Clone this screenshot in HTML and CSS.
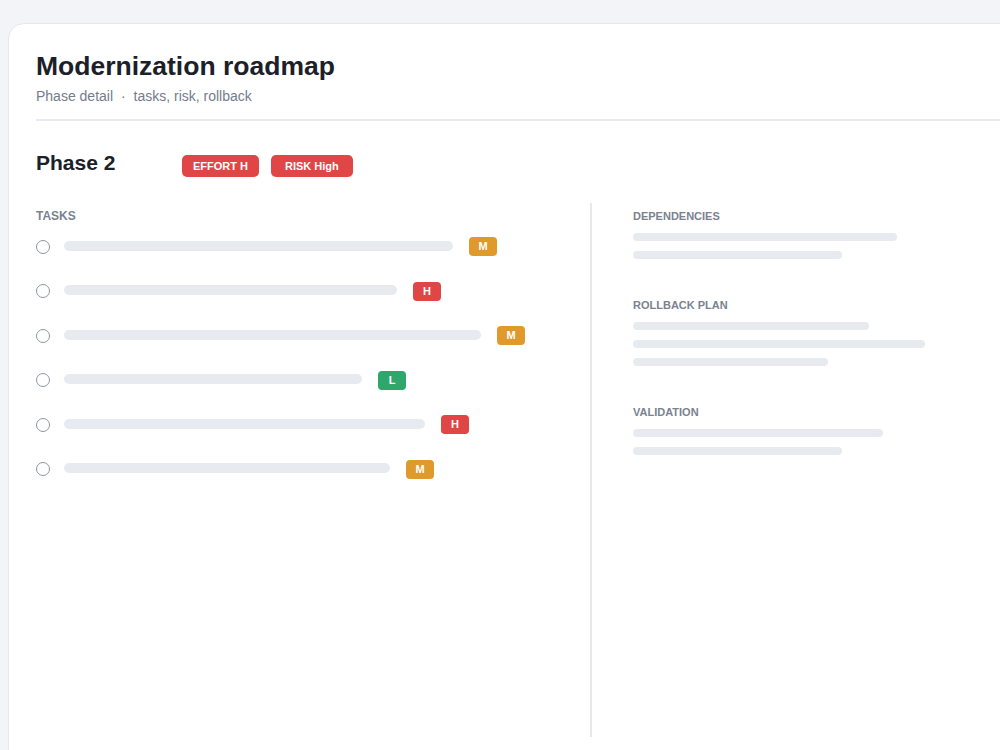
FILE: index.html
```html
<!doctype html>
<html>
    <head>
        <title>Modernization roadmap</title>
        <link rel="stylesheet" href="styles.css">
    </head>
    <body>
        <div class="card">
            <header class="head">
                <h1>Modernization roadmap</h1>
                <p class="sub">Phase detail <span class="dot">·</span> tasks, risk, rollback</p>
            </header>

            <div class="phase">
                <h2>Phase 2</h2>
                <span class="pill red">EFFORT H</span>
                <span class="pill red wide">RISK High</span>
            </div>

            <div class="cols">
                <section class="tasks">
                    <h3>Tasks</h3>
                    <ul>
                        <li><span class="check"></span><span class="bar" style="width: 389px"></span><span class="tag m">M</span></li>
                        <li><span class="check"></span><span class="bar" style="width: 333px"></span><span class="tag h">H</span></li>
                        <li><span class="check"></span><span class="bar" style="width: 417px"></span><span class="tag m">M</span></li>
                        <li><span class="check"></span><span class="bar" style="width: 298px"></span><span class="tag l">L</span></li>
                        <li><span class="check"></span><span class="bar" style="width: 361px"></span><span class="tag h">H</span></li>
                        <li><span class="check"></span><span class="bar" style="width: 326px"></span><span class="tag m">M</span></li>
                    </ul>
                </section>

                <aside class="side">
                    <div class="block">
                        <h4>Dependencies</h4>
                        <span class="line" style="width: 264px"></span>
                        <span class="line" style="width: 209px"></span>
                    </div>
                    <div class="block">
                        <h4>Rollback plan</h4>
                        <span class="line" style="width: 236px"></span>
                        <span class="line" style="width: 292px"></span>
                        <span class="line" style="width: 195px"></span>
                    </div>
                    <div class="block">
                        <h4>Validation</h4>
                        <span class="line" style="width: 250px"></span>
                        <span class="line" style="width: 209px"></span>
                    </div>
                </aside>
            </div>
        </div>
    </body>
</html>
```

FILE: styles.css
```css
* { margin: 0; padding: 0; box-sizing: border-box; }

body {
    font-family: 'Liberation Sans', Arial, sans-serif;
    background: #f3f4f8;
    overflow: hidden;
    height: 750px;
}

.card {
    margin: 23px 0 0 8px;
    width: 1060px;
    height: 780px;
    background: #fff;
    border: 1px solid #e4e7ec;
    border-radius: 16px;
    padding: 26px 27px 0;
}

.head {
    border-bottom: 2px solid #e8eaef;
    padding-bottom: 13px;
}

h1 {
    font-size: 26.5px;
    font-weight: bold;
    color: #1c2029;
    line-height: 32px;
}

.sub {
    margin-top: 4px;
    font-size: 14px;
    color: #747c8a;
    line-height: 20px;
}

.sub .dot { padding: 0 4px; }

.phase {
    display: flex;
    align-items: center;
    height: 82px;
    padding: 10px 0 2px;
}

h2 {
    font-size: 21px;
    color: #1c2029;
    width: 146px;
    line-height: 24px;
    margin-top: -6px;
}

.pill {
    height: 22px;
    line-height: 22px;
    padding: 0 11px;
    margin-right: 12px;
    border-radius: 5px;
    color: #fff;
    font-size: 11px;
    font-weight: bold;
}

.pill.wide { padding: 0 14px; }

.red { background: #e04646; }

.cols {
    display: grid;
    grid-template-columns: 556px auto;
    height: 534px;
}

.tasks {
    border-right: 2px solid #e6e8ec;
    padding-top: 6px;
}

h3, h4 {
    font-size: 12px;
    font-weight: bold;
    text-transform: uppercase;
    color: #7a8290;
    line-height: 14px;
}

.tasks ul {
    list-style: none;
    margin-top: 14px;
    display: flex;
    flex-direction: column;
    gap: 25.5px;
}

.tasks li {
    display: flex;
    align-items: center;
    height: 19px;
}

.check {
    width: 14px;
    height: 14px;
    border: 1.5px solid #8f96a1;
    border-radius: 50%;
    margin-right: 14px;
    flex: none;
}

.bar {
    height: 10px;
    border-radius: 5px;
    background: #e7eaef;
    margin-right: 16px;
    margin-top: -2px;
}

.tag {
    width: 28px;
    height: 19px;
    line-height: 19px;
    text-align: center;
    border-radius: 4px;
    color: #fff;
    font-size: 11px;
    font-weight: bold;
}

.tag.m { background: #e09a2c; }
.tag.h { background: #e04646; }
.tag.l { background: #2fa66c; }

.side { padding: 7px 0 0 41px; }

.block { margin-bottom: 40px; }

.block h4 { font-size: 11px; line-height: 13px; }

.line {
    display: block;
    height: 8px;
    border-radius: 4px;
    background: #e7eaef;
    margin-top: 10px;
}
```
